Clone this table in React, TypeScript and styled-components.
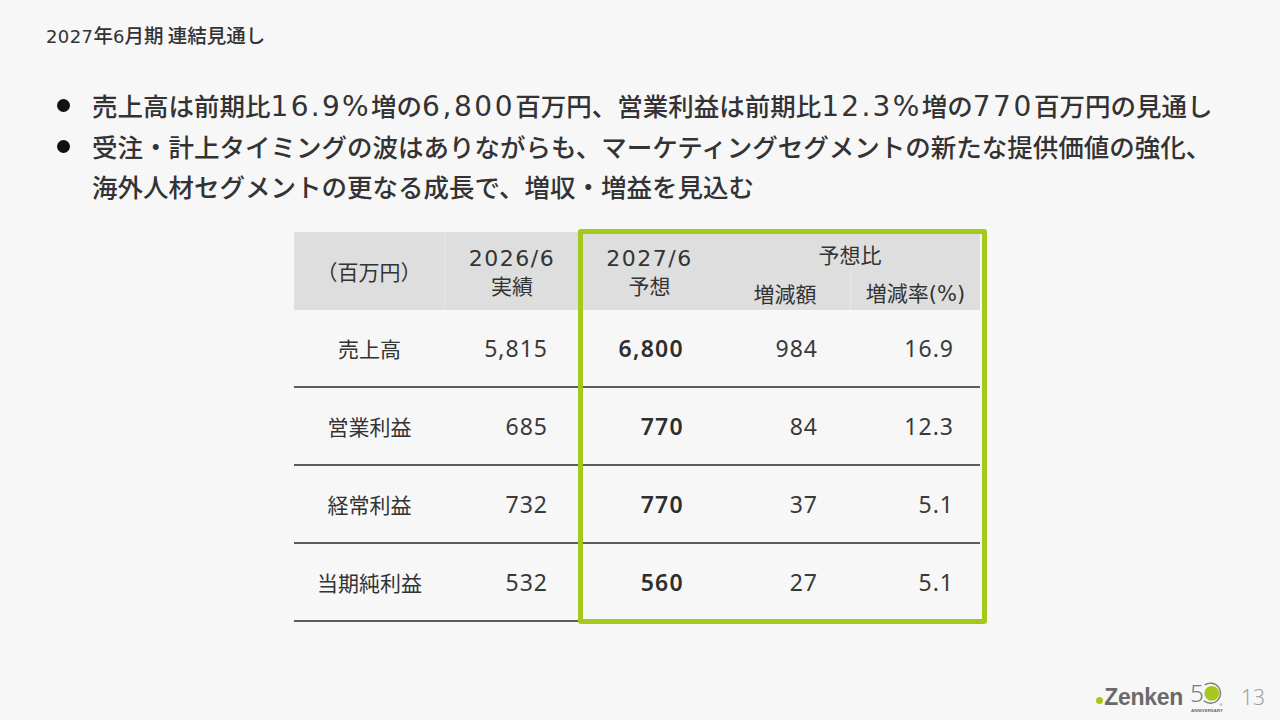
import React from "react";
import styled, { createGlobalStyle } from "styled-components";

const GlobalStyle = createGlobalStyle`
  html, body { margin: 0; padding: 0; background: #f7f7f7; }
  body { font-family: "Noto Sans CJK JP", "Noto Sans", sans-serif; color: #333; }
  #root { width: 1280px; height: 720px; }
`;

const GREEN = "#a4c81c";

const Page = styled.div`
  width: 1280px;
  height: 720px;
  box-sizing: border-box;
  display: flex;
  flex-direction: column;
  background: #f7f7f7;
  overflow: hidden;
`;

const Title = styled.h1`
  margin: 21px 0 0 46px;
  font-size: 19.5px;
  line-height: 28px;
  font-weight: 500;
  color: #333;
`;

const Num = styled.span<{ $size?: number; $track?: number; $tight?: boolean }>`
  font-family: "DejaVu Sans", "Noto Sans", sans-serif;
  font-size: ${(p) => (p.$size ? `${p.$size}px` : "inherit")};
  letter-spacing: ${(p) => p.$track ?? 0}px;
  line-height: ${(p) => (p.$tight ? 1 : "inherit")};
`;

const Bullets = styled.ul`
  list-style: none;
  margin: 34px 0 0 0;
  padding: 0 0 0 57px;
`;

const Item = styled.li`
  display: flex;
  align-items: flex-start;
  font-size: 25.5px;
  line-height: 40.5px;
  font-weight: 500;
  color: #333;
`;

const Dot = styled.span`
  flex: none;
  width: 13px;
  height: 13px;
  border-radius: 50%;
  background: #111;
  margin: 14px 22px 0 0;
`;

const TableWrap = styled.div`
  position: relative;
  margin: 25px 0 0 294px;
  width: 686px;
`;

const Table = styled.table`
  border-collapse: separate;
  border-spacing: 0;
  table-layout: fixed;
  width: 686px;
`;

const HeadRow = styled.tr`
  height: 39px;
`;

const HeadCell = styled.th<{ $divider?: boolean; $pad?: number }>`
  background: #dedede;
  font-size: 21px;
  line-height: 26px;
  font-weight: 400;
  color: #333;
  text-align: center;
  vertical-align: middle;
  padding: ${(p) => p.$pad ?? 0}px 0 0 0;
  border-right: ${(p) => (p.$divider ? "1px solid #e8e8e8" : "none")};
`;

const BodyRow = styled.tr`
  height: 78px;
`;

const LabelCell = styled.td`
  font-size: 21px;
  font-weight: 400;
  color: #333;
  text-align: center;
  vertical-align: middle;
  border-bottom: 2px solid #5c5c5c;
  padding: 0;
`;

const ValueCell = styled.td<{ $pad: number; $bold?: boolean }>`
  font-family: "Noto Sans", sans-serif;
  font-size: 23px;
  letter-spacing: ${(p) => (p.$bold ? 1.3 : 1)}px;
  font-weight: ${(p) => (p.$bold ? 600 : 400)};
  color: ${(p) => (p.$bold ? "#2e2e2e" : "#3a3a3a")};
  text-align: right;
  vertical-align: middle;
  padding: 0 ${(p) => p.$pad}px 0 0;
  border-bottom: 2px solid #5c5c5c;
`;

const Frame = styled.div`
  position: absolute;
  left: 284px;
  top: -3px;
  width: 409px;
  height: 395px;
  box-sizing: border-box;
  border: 5px solid ${GREEN};
  border-radius: 3px;
  pointer-events: none;
`;

const Footer = styled.div`
  margin-top: auto;
  display: flex;
  justify-content: flex-end;
  align-items: center;
  padding: 0 15px 6px 0;
`;

const Brand = styled.div`
  display: flex;
  align-items: center;
`;

const BrandDot = styled.span`
  width: 7px;
  height: 7px;
  border-radius: 50%;
  background: ${GREEN};
  margin: 6px 1px 0 0;
`;

const BrandText = styled.span`
  font-family: "Liberation Sans", Arial, sans-serif;
  font-weight: 700;
  font-size: 23px;
  letter-spacing: -0.3px;
  color: #6a6a6a;
  line-height: 30px;
`;

const Anniversary = styled.svg`
  width: 36px;
  height: 34px;
  margin-left: 6px;
  overflow: visible;
`;

const PageNo = styled.span`
  font-family: "Noto Sans", sans-serif;
  font-size: 21px;
  font-weight: 300;
  color: #a0a0a0;
  margin-left: 16px;
  line-height: 30px;
`;

type Row = { label: string; a: string; b: string; c: string; d: string };

const rows: Row[] = [
  { label: "売上高", a: "5,815", b: "6,800", c: "984", d: "16.9" },
  { label: "営業利益", a: "685", b: "770", c: "84", d: "12.3" },
  { label: "経常利益", a: "732", b: "770", c: "37", d: "5.1" },
  { label: "当期純利益", a: "532", b: "560", c: "27", d: "5.1" },
];

export default function App() {
  return (
    <>
      <GlobalStyle />
      <Page>
        <Title>
          <Num $size={18} $track={0.4}>2027</Num>年<Num $size={18}>6</Num>月期 連結見通し
        </Title>
        <Bullets>
          <Item>
            <Dot />
            <span>
              売上高は前期比<Num $size={28} $track={2.3} $tight>16.9%</Num>増の
              <Num $size={28} $track={2.6} $tight>6,800</Num>百万円、営業利益は前期比
              <Num $size={28} $track={2.3} $tight>12.3%</Num>増の
              <Num $size={28} $track={2.6} $tight>770</Num>百万円の見通し
            </span>
          </Item>
          <Item>
            <Dot />
            <span>
              受注・計上タイミングの波はありながらも、マーケティングセグメントの新たな提供価値の強化、
              <br />
              海外人材セグメントの更なる成長で、増収・増益を見込む
            </span>
          </Item>
        </Bullets>
        <TableWrap>
          <Table>
            <colgroup>
              <col style={{ width: 151 }} />
              <col style={{ width: 134 }} />
              <col style={{ width: 141 }} />
              <col style={{ width: 131 }} />
              <col style={{ width: 129 }} />
            </colgroup>
            <thead>
              <HeadRow>
                <HeadCell rowSpan={2} $divider>
                  （百万円）
                </HeadCell>
                <HeadCell rowSpan={2}>
                  <Num $size={22} $track={1.5}>2026/6</Num>
                  <br />
                  実績
                </HeadCell>
                <HeadCell rowSpan={2}>
                  <Num $size={22} $track={1.5}>2027/6</Num>
                  <br />
                  予想
                </HeadCell>
                <HeadCell colSpan={2} $pad={6}>
                  予想比
                </HeadCell>
              </HeadRow>
              <HeadRow>
                <HeadCell $divider $pad={6}>
                  増減額
                </HeadCell>
                <HeadCell $pad={6}>
                  増減率<Num $size={21}>(%)</Num>
                </HeadCell>
              </HeadRow>
            </thead>
            <tbody>
              {rows.map((r) => (
                <BodyRow key={r.label}>
                  <LabelCell>{r.label}</LabelCell>
                  <ValueCell $pad={31}>{r.a}</ValueCell>
                  <ValueCell $pad={36} $bold>
                    {r.b}
                  </ValueCell>
                  <ValueCell $pad={33}>{r.c}</ValueCell>
                  <ValueCell $pad={26}>{r.d}</ValueCell>
                </BodyRow>
              ))}
            </tbody>
          </Table>
          <Frame />
        </TableWrap>
        <Footer>
          <Brand>
            <BrandDot />
            <BrandText>Zenken</BrandText>
          </Brand>
          <Anniversary viewBox="0 0 34 32">
            <text
              x="1"
              y="21"
              fontFamily="Noto Sans, sans-serif"
              fontSize="23"
              fontWeight="300"
              fill="#7a7a7a"
            >
              5
            </text>
            <path
              d="M15 4.5 A9.5 9.5 0 1 1 14 19.5"
              fill="none"
              stroke="#7a7a7a"
              strokeWidth="1.3"
            />
            <circle cx="21.5" cy="12.5" r="7" fill={GREEN} />
            <text x="29" y="24.5" fontFamily="Liberation Sans, sans-serif" fontSize="3" fill="#777">
              th
            </text>
            <text
              x="2"
              y="30"
              fontFamily="Liberation Sans, sans-serif"
              fontSize="4"
              fontWeight="700"
              fill="#666"
              textLength="30"
              lengthAdjust="spacingAndGlyphs"
            >
              ANNIVERSARY
            </text>
          </Anniversary>
          <PageNo>13</PageNo>
        </Footer>
      </Page>
    </>
  );
}
